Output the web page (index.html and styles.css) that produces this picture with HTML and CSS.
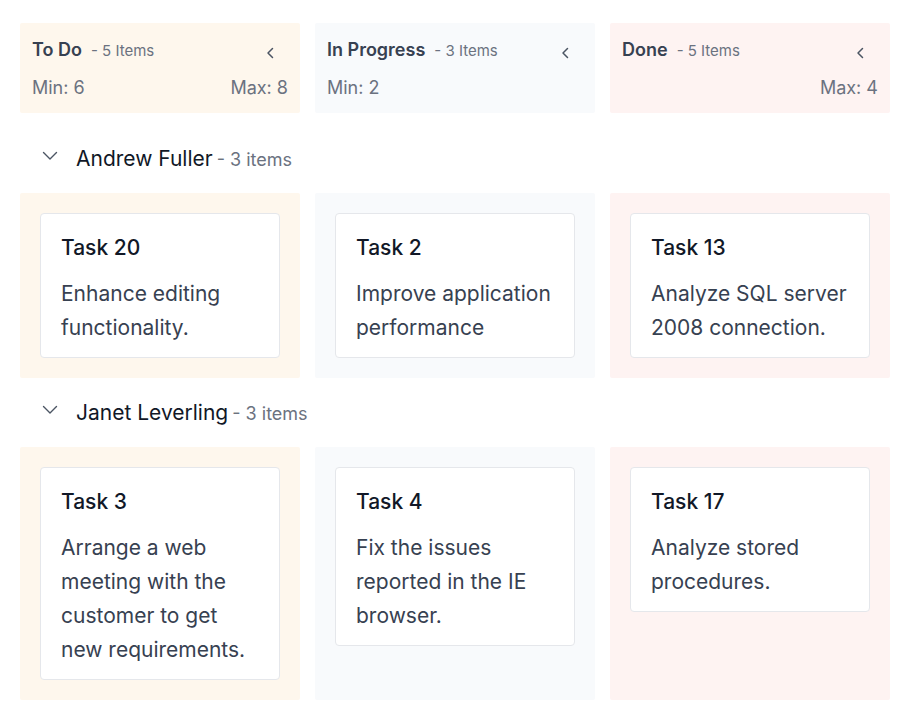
FILE: index.html
```html
<!DOCTYPE html>
<html lang="en">
<head>
<meta charset="utf-8">
<title>Kanban</title>
<link rel="stylesheet" href="styles.css">
</head>
<body>
<div class="board">
  <div class="headers">
    <div class="col-head todo">
      <div class="head-row">
        <div class="head-title"><span class="name">To Do</span><span class="count">- 5 Items</span></div>
        <svg class="collapse" width="12" height="12" viewBox="0 0 12 12"><path d="M7.5 1.5 L3 6 L7.5 10.5" fill="none" stroke="#4b5563" stroke-width="1.5" stroke-linecap="round" stroke-linejoin="round"/></svg>
      </div>
      <div class="limits"><span>Min: 6</span><span>Max: 8</span></div>
    </div>
    <div class="col-head progress">
      <div class="head-row">
        <div class="head-title"><span class="name">In Progress</span><span class="count">- 3 Items</span></div>
        <svg class="collapse" width="12" height="12" viewBox="0 0 12 12"><path d="M7.5 1.5 L3 6 L7.5 10.5" fill="none" stroke="#4b5563" stroke-width="1.5" stroke-linecap="round" stroke-linejoin="round"/></svg>
      </div>
      <div class="limits"><span>Min: 2</span><span></span></div>
    </div>
    <div class="col-head done">
      <div class="head-row">
        <div class="head-title"><span class="name">Done</span><span class="count">- 5 Items</span></div>
        <svg class="collapse" width="12" height="12" viewBox="0 0 12 12"><path d="M7.5 1.5 L3 6 L7.5 10.5" fill="none" stroke="#4b5563" stroke-width="1.5" stroke-linecap="round" stroke-linejoin="round"/></svg>
      </div>
      <div class="limits"><span></span><span>Max: 4</span></div>
    </div>
  </div>

  <div class="lane-head">
    <svg class="expand" width="16" height="16" viewBox="0 0 16 16"><path d="M1.5 4.5 L8 11 L14.5 4.5" fill="none" stroke="#4b5563" stroke-width="1.4" stroke-linecap="round" stroke-linejoin="round"/></svg>
    <span class="lane-name">Andrew Fuller</span><span class="lane-count">- 3 items</span>
  </div>
  <div class="lane">
    <div class="cell todo">
      <div class="card"><div class="card-title">Task 20</div><div class="card-text">Enhance editing functionality.</div></div>
    </div>
    <div class="cell progress">
      <div class="card"><div class="card-title">Task 2</div><div class="card-text">Improve application performance</div></div>
    </div>
    <div class="cell done">
      <div class="card"><div class="card-title">Task 13</div><div class="card-text">Analyze SQL server 2008 connection.</div></div>
    </div>
  </div>

  <div class="lane-head">
    <svg class="expand" width="16" height="16" viewBox="0 0 16 16"><path d="M1.5 4.5 L8 11 L14.5 4.5" fill="none" stroke="#4b5563" stroke-width="1.4" stroke-linecap="round" stroke-linejoin="round"/></svg>
    <span class="lane-name">Janet Leverling</span><span class="lane-count">- 3 items</span>
  </div>
  <div class="lane">
    <div class="cell todo">
      <div class="card"><div class="card-title">Task 3</div><div class="card-text">Arrange a web meeting with the customer to get new requirements.</div></div>
    </div>
    <div class="cell progress">
      <div class="card"><div class="card-title">Task 4</div><div class="card-text">Fix the issues reported in the IE browser.</div></div>
    </div>
    <div class="cell done">
      <div class="card"><div class="card-title">Task 17</div><div class="card-text">Analyze stored procedures.</div></div>
    </div>
  </div>
</div>
</body>
</html>
```

FILE: styles.css
```css
* { box-sizing: border-box; }
body {
  margin: 0;
  background: #ffffff;
  font-family: Inter, "Noto Sans", sans-serif;
  color: #111827;
}
.board {
  padding: 23px 30px 0 20px;
}
.headers, .lane {
  display: grid;
  grid-template-columns: 280px 280px 280px;
  column-gap: 15px;
}
.headers { margin-bottom: 11px; }
.todo { background: #fef7ed; }
.progress { background: #f8fafc; }
.done { background: #fef3f2; }

.col-head {
  padding: 12px 12px 12px 12px;
  border-radius: 2px;
  display: flex;
  flex-direction: column;
  gap: 10px;
}
.head-row {
  height: 28px;
  display: flex;
  align-items: center;
  justify-content: space-between;
}
.head-title { display: flex; align-items: baseline; }
.name {
  font-size: 18px;
  font-weight: 600;
  color: #374151;
}
.count {
  font-size: 15px;
  color: #6b7280;
  margin-left: 9px;
}
.collapse { margin-right: 11px; margin-top: 8px; }
.limits {
  height: 28px;
  display: flex;
  align-items: center;
  justify-content: space-between;
  font-size: 18px;
  color: #6b7280;
}

.lane-head {
  height: 69px;
  display: flex;
  align-items: baseline;
  padding-left: 22px;
  padding-top: 22px;
}
.expand { margin-right: 18px; align-self: center; margin-top: -28px; }
.lane-name { font-size: 21px; color: #111827; }
.lane-count { font-size: 18px; color: #6b7280; margin-left: 4px; }

.cell {
  padding: 20px;
  border-radius: 2px;
}
.card {
  background: #ffffff;
  border: 1px solid #e5e7eb;
  border-radius: 4px;
  padding: 22px 18px 12px 20px;
}
.card-title {
  font-size: 21px;
  line-height: 24px;
  font-weight: 500;
  color: #111827;
  margin-bottom: 17px;
}
.card-text {
  font-size: 21px;
  line-height: 34px;
  color: #374151;
}
```
